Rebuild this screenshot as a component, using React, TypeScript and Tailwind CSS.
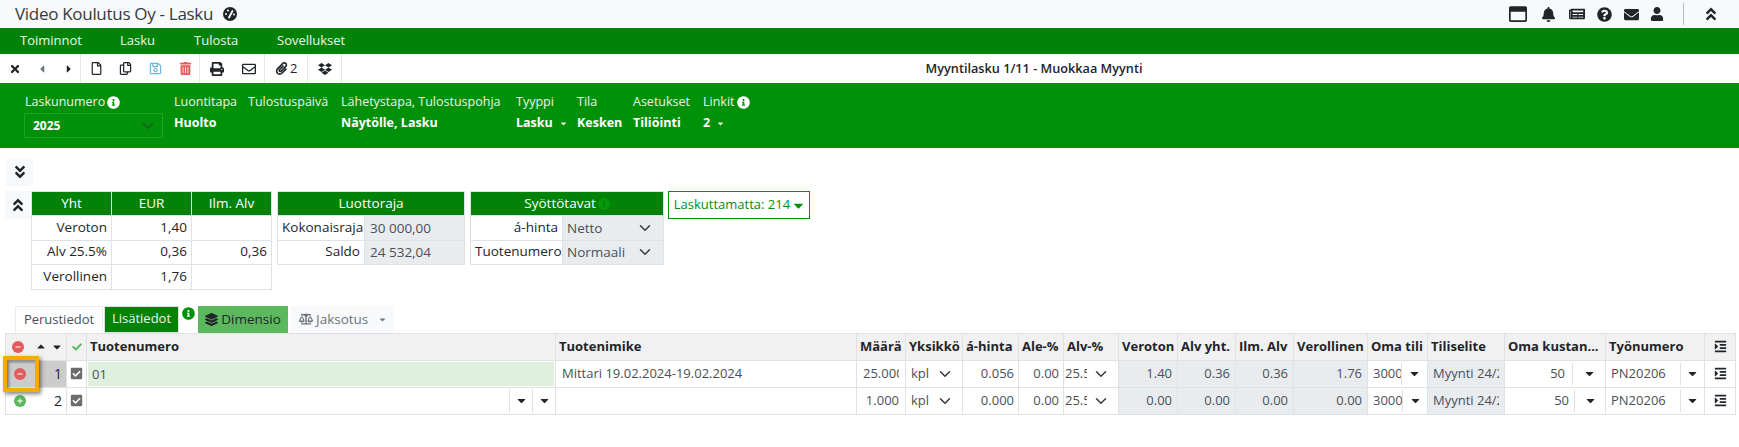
import React from 'react';
import {
  FaAngleDoubleDown, FaAngleDoubleUp, FaBalanceScale, FaBell, FaCaretDown, FaCaretLeft, FaCaretRight,
  FaCheck, FaCheckSquare, FaDropbox, FaEnvelope, FaIndent, FaInfoCircle, FaLayerGroup, FaNewspaper,
  FaPaperclip, FaPrint, FaQuestionCircle, FaRegCopy, FaRegEnvelope, FaRegFile,
  FaRegSave, FaRegWindowMaximize, FaTimes, FaTrashAlt, FaUser,
} from 'react-icons/fa';

const Chevron = ({ className = '' }: { className?: string }) => (
  <svg viewBox="0 0 16 16" className={`w-[12px] h-[12px] shrink-0 ${className}`} fill="none" stroke="#343a40" strokeWidth="2" strokeLinecap="round" strokeLinejoin="round">
    <path d="M2 5l6 6 6-6" />
  </svg>
);

const Caret = ({ className = '' }: { className?: string }) => <FaCaretDown className={`text-[13px] text-[#212529] shrink-0 ${className}`} />;

const Gauge = () => (
  <svg viewBox="0 0 14 14" className="ml-[10px] w-[14px] h-[14px]">
    <circle cx="7" cy="7" r="7" fill="#212529" />
    <path d="M6 10.5L9.5 4" stroke="#fff" strokeWidth="1.8" strokeLinecap="round" />
    <circle cx="3" cy="7" r="1" fill="#fff" />
    <circle cx="5" cy="3.6" r="1" fill="#fff" />
    <circle cx="11" cy="7.5" r="1" fill="#fff" />
  </svg>
);

const RoundMinus = () => (
  <svg viewBox="0 0 12 12" className="w-[12px] h-[12px] shrink-0">
    <circle cx="6" cy="6" r="6" fill="#e25c5c" />
    <rect x="3.5" y="5.3" width="5" height="1.4" fill="#f6d5d5" />
  </svg>
);

const RoundPlus = () => (
  <svg viewBox="0 0 12 12" className="w-[12px] h-[12px] shrink-0">
    <circle cx="6" cy="6" r="6" fill="#5cb85c" />
    <path d="M3.5 6h5M6 3.5v5" stroke="#d9f0d9" strokeWidth="1.4" />
  </svg>
);

const ToolSep = () => <div className="w-px self-stretch bg-[#e4e6e8]" />;

const Field = ({ label, value, caret, className }: { label: React.ReactNode; value?: string; caret?: boolean; className: string }) => (
  <div className={className}>
    <div className="text-[12.5px] leading-[18px] text-[#e8f5e8] whitespace-nowrap flex items-center gap-[2px]">{label}</div>
    <div className="mt-[3px] h-[18px] text-[12.5px] leading-[18px] font-bold text-white whitespace-nowrap flex items-center">
      {value}
      {caret && <FaCaretDown className="text-[9px] ml-[6px] text-[#e8f5e8]" />}
    </div>
  </div>
);

const SumTable = () => (
  <table className="table-fixed border-collapse text-[13.5px] w-[241px]">
    <tbody>
      <tr className="h-[24px] bg-[#028207] text-white text-center">
        {['Yht', 'EUR', 'Ilm. Alv'].map(h => <td key={h} className="border border-[#dee2e6] font-normal">{h}</td>)}
      </tr>
      {[['Veroton', '1,40', ''], ['Alv 25.5%', '0,36', '0,36'], ['Verollinen', '1,76', '']].map(r => (
        <tr key={r[0]} className="h-[24.5px] text-right text-[#212529]">
          {r.map((c, i) => <td key={i} className="border border-[#dee2e6] px-[4px] pb-[2px] w-[80px]">{c}</td>)}
        </tr>
      ))}
    </tbody>
  </table>
);

const CreditTable = () => (
  <table className="table-fixed border-collapse text-[13.5px] w-[187px] ml-[5px] self-start">
    <colgroup>
      <col className="w-[87px]" />
      <col className="w-[100px]" />
    </colgroup>
    <tbody>
      <tr className="h-[24px] bg-[#028207] text-white text-center">
        <td colSpan={2} className="border border-[#dee2e6]">Luottoraja</td>
      </tr>
      {[['Kokonaisraja', '30 000,00'], ['Saldo', '24 532,04']].map(r => (
        <tr key={r[0]} className="h-[24.5px] text-[#212529]">
          <td className="border border-[#dee2e6] text-right px-[4px] pb-[2px]">{r[0]}</td>
          <td className="border border-[#dee2e6] bg-[#e9ecef] px-[5px] text-[#495057]">{r[1]}</td>
        </tr>
      ))}
    </tbody>
  </table>
);

const ModeTable = () => (
  <table className="table-fixed border-collapse text-[13.5px] w-[193px] ml-[5px] self-start">
    <colgroup>
      <col className="w-[92px]" />
      <col className="w-[101px]" />
    </colgroup>
    <tbody>
      <tr className="h-[24px] bg-[#028207] text-white text-center">
        <td colSpan={2} className="border border-[#dee2e6]">
          <span className="inline-flex items-center gap-[2px]">Syöttötavat <FaInfoCircle className="text-[12px] text-[#049a0c]" /></span>
        </td>
      </tr>
      {[['á-hinta', 'Netto'], ['Tuotenumero', 'Normaali']].map(r => (
        <tr key={r[0]} className="h-[24.5px] text-[#212529]">
          <td className="border border-[#dee2e6] text-right px-[4px] pb-[2px]">{r[0]}</td>
          <td className="border border-[#dee2e6] bg-[#e9ecef] pl-[4px] pr-[12px] text-[#495057]">
            <div className="flex items-center justify-between">{r[1]}<Chevron /></div>
          </td>
        </tr>
      ))}
    </tbody>
  </table>
);

const COLS = ['w-[61px]', 'w-[20px]', 'w-[469px]', 'w-[301px]', 'w-[49px]', 'w-[57px]', 'w-[56px]', 'w-[45px]', 'w-[55px]', 'w-[59px]', 'w-[58px]', 'w-[58px]', 'w-[74px]', 'w-[60px]', 'w-[77px]', 'w-[101px]', 'w-[99px]', 'w-[31px]'];
const HEADS = ['Tuotenumero', 'Tuotenimike', 'Määrä', 'Yksikkö', 'á-hinta', 'Ale-%', 'Alv-%', 'Veroton', 'Alv yht.', 'Ilm. Alv', 'Verollinen', 'Oma tili', 'Tiliselite', 'Oma kustan...', 'Työnumero'];
const TD = 'border border-[#dee2e6] p-0 overflow-hidden whitespace-nowrap';

const Row = ({ n, first }: { n: number; first: boolean }) => {
  const money = first ? ['1.40', '0.36', '0.36'] : ['0.00', '0.00', '0.00'];
  return (
    <tr className="h-[27px] text-[13px] text-[#495057]">
      <td className={`${TD} ${first ? 'bg-[#cccccc]' : ''}`}>
        <div className="flex items-center justify-between pl-[8px] pr-[4px] text-[#212529] text-[14px]">
          {first ? <RoundMinus /> : <RoundPlus />}
          {n}
        </div>
      </td>
      <td className={TD}>
        <FaCheckSquare className="text-[13px] text-[#6c6c6c] mx-auto" />
      </td>
      <td className={TD}>
        {first
          ? <div className="mx-[1px] h-[24px] leading-[24px] bg-[#dff0df] px-[4px]">01</div>
          : (
            <div className="flex items-center justify-end h-[24px]">
              <div className="w-[23px] h-[24px] border-l border-[#dee2e6] flex items-center justify-center"><Caret /></div>
              <div className="w-[23px] h-[24px] border-l border-[#dee2e6] flex items-center justify-center"><Caret /></div>
            </div>
          )}
      </td>
      <td className={`${TD} px-[6px]`}>{first ? 'Mittari 19.02.2024-19.02.2024' : ''}</td>
      <td className={TD}>
        <div className="ml-[6px] mr-[6px] overflow-hidden text-right">{first ? <span className="block w-[37px] overflow-hidden">25.000</span> : '1.000'}</div>
      </td>
      <td className={`${TD} pl-[5px] pr-[11px]`}><div className="flex items-center justify-between">kpl<Chevron /></div></td>
      <td className={`${TD} text-right px-[4px]`}>{first ? '0.056' : '0.000'}</td>
      <td className={`${TD} text-right px-[4px]`}>0.00</td>
      <td className={`${TD} pl-[1px] pr-[11px]`}>
        <div className="flex items-center justify-between"><span className="w-[22px] overflow-hidden">25.5</span><Chevron /></div>
      </td>
      {money.map((m, i) => <td key={i} className={`${TD} bg-[#e9ecef] text-right px-[5px]`}>{m}</td>)}
      <td className={`${TD} bg-[#e9ecef] text-right px-[5px]`}>{first ? '1.76' : '0.00'}</td>
      <td className={TD}>
        <div className="flex items-center h-[24px] pl-[5px]">
          <span className={`${first ? 'w-[28px]' : 'w-[29px]'} overflow-hidden shrink-0`}>3000</span>
          <div className="flex-1 h-[22px] border-l border-[#dee2e6] flex items-center justify-center"><Caret /></div>
        </div>
      </td>
      <td className={`${TD} bg-[#e9ecef] pl-[5px]`}><span className="block w-[66px] overflow-hidden">Myynti 24/2</span></td>
      <td className={TD}>
        <div className="flex items-center h-[24px]">
          <span className={`flex-1 text-right ${first ? 'pr-[7px]' : 'pr-[5px]'}`}>50</span>
          <div className={`${first ? 'w-[33px]' : 'w-[31px]'} h-[22px] border-l border-[#dee2e6] flex items-center justify-center`}><Caret /></div>
        </div>
      </td>
      <td className={TD}>
        <div className="flex items-center h-[24px] pl-[5px]">
          <span className="flex-1">PN20206</span>
          <div className="w-[24px] h-[22px] border-l border-[#dee2e6] flex items-center justify-center"><Caret /></div>
        </div>
      </td>
      <td className={TD}><FaIndent className="text-[13px] text-[#212529] mx-auto" /></td>
    </tr>
  );
};

export default function App() {
  return (
    <div className="relative w-[1739px] h-[447px] bg-white overflow-hidden font-['Open_Sans',sans-serif] text-[#212529]">
      {/* title bar */}
      <div className="h-[28px] bg-[#f8f9fa] flex items-center pl-[15px] pr-[5px]">
        <span className="text-[17px] leading-[28px] tracking-[-0.3px] text-[#343a40]">Video Koulutus Oy - Lasku</span>
        <Gauge />
        <div className="ml-auto flex items-center text-[#212529]">
          <FaRegWindowMaximize className="text-[18px] mr-[14px]" />
          <FaBell className="text-[15px] mr-[13px]" />
          <FaNewspaper className="text-[16px] mr-[12px]" />
          <FaQuestionCircle className="text-[15px] mr-[12px]" />
          <FaEnvelope className="text-[15px] mr-[11px]" />
          <FaUser className="text-[14px] mr-[19px]" />
          <div className="w-px h-[22px] bg-[#b8bcc0] mr-[19px]" />
          <FaAngleDoubleUp className="text-[16px] mr-[15px]" />
        </div>
      </div>

      {/* menu */}
      <div className="h-[26px] bg-[#028207] flex items-center pl-[20px] text-[13px] text-[#eef8ee]">
        <span className="w-[100px]">Toiminnot</span>
        <span className="w-[74px]">Lasku</span>
        <span className="w-[83px]">Tulosta</span>
        <span>Sovellukset</span>
      </div>

      {/* toolbar */}
      <div className="relative h-[29px] flex items-center bg-white">
        <div className="flex items-center h-full w-[80px] shrink-0 pl-[9px]">
          <FaTimes className="text-[12px] text-[#212529]" />
          <FaCaretLeft className="text-[12px] text-[#6c757d] ml-[15px]" />
          <FaCaretRight className="text-[12px] text-[#212529] ml-[15px]" />
        </div>
        <ToolSep />
        <div className="flex items-center h-full w-[118px] shrink-0 pl-[9px]">
          <FaRegFile className="text-[13px] text-[#212529]" />
          <FaRegCopy className="text-[13px] text-[#212529] ml-[16px]" />
          <FaRegSave className="text-[13px] text-[#6db6de] ml-[17px]" />
          <FaTrashAlt className="text-[13px] text-[#e35d5d] ml-[17px]" />
        </div>
        <ToolSep />
        <div className="flex items-center h-full w-[64px] shrink-0 pl-[10px]">
          <FaPrint className="text-[14px] text-[#212529]" />
          <FaRegEnvelope className="text-[14px] text-[#212529] ml-[18px]" />
        </div>
        <ToolSep />
        <div className="flex items-center h-full w-[42px] shrink-0 pl-[10px] text-[13px]">
          <FaPaperclip className="text-[13px] text-[#212529]" />
          <span className="ml-[2px]">2</span>
        </div>
        <ToolSep />
        <div className="flex items-center justify-center h-full w-[33px] shrink-0">
          <FaDropbox className="text-[14px] text-[#212529]" />
        </div>
        <ToolSep />
        <div className="flex-1 text-center text-[12.7px] font-semibold text-[#212529] pr-[13px]">Myyntilasku 1/11 - Muokkaa Myynti</div>
      </div>

      {/* header panel */}
      <div className="h-[65px] bg-[#019108] flex pt-[10px] pl-[24px]">
        <div className="w-[150px] shrink-0">
          <div className="text-[12.5px] leading-[18px] text-[#e8f5e8] flex items-center gap-[2px] pl-[1px]">
            Laskunumero <FaInfoCircle className="text-[13px] text-white" />
          </div>
          <div className="mt-[2px] w-[139px] h-[25px] border border-[#1ea326] flex items-center justify-between pl-[8px] pr-[8px] text-[12px] font-bold text-white">
            2025
            <Chevron className="opacity-60" />
          </div>
        </div>
        <Field className="w-[74px] shrink-0" label="Luontitapa" value="Huolto" />
        <Field className="w-[93px] shrink-0" label="Tulostuspäivä" />
        <Field className="w-[175px] shrink-0" label="Lähetystapa, Tulostuspohja" value="Näytölle, Lasku" />
        <Field className="w-[61px] shrink-0" label="Tyyppi" value="Lasku" caret />
        <Field className="w-[56px] shrink-0" label="Tila" value="Kesken" />
        <Field className="w-[70px] shrink-0" label="Asetukset" value="Tiliöinti" />
        <Field
          className="shrink-0"
          label={<>Linkit <FaInfoCircle className="text-[13px] text-white" /></>}
          value="2"
          caret
        />
      </div>

      {/* collapse button */}
      <div className="ml-[6px] mt-[10px] w-[27px] h-[28px] bg-[#f8f9fa] flex items-center justify-center">
        <FaAngleDoubleDown className="text-[16px] text-[#212529]" />
      </div>

      {/* summary tables */}
      <div className="flex items-start mt-[5px] ml-[5px]">
        <div className="w-[26px] h-[28px] bg-[#f8f9fa] flex items-center justify-center shrink-0">
          <FaAngleDoubleUp className="text-[16px] text-[#212529]" />
        </div>
        <SumTable />
        <CreditTable />
        <ModeTable />
        <div className="ml-[4px] w-[142px] h-[28px] border border-[#019108] flex items-center justify-center text-[13px] text-[#019108] gap-[3px] pl-[2px]">
          Laskuttamatta: 214 <FaCaretDown className="text-[15px] -ml-[2px]" />
        </div>
      </div>

      {/* tabs */}
      <div className="flex items-end h-[27px] mt-[16px] ml-[15px] text-[13px]">
        <div className="w-[88px] h-[27px] border-t border-x border-[#e9ecef] flex items-center justify-center text-[#495057]">Perustiedot</div>
        <div className="ml-[1px] w-[75px] h-[27px] bg-[#028207] border border-[#dee2e6] flex items-center justify-center text-[#eef8ee]">Lisätiedot</div>
        <div className="w-[19px] h-[27px] flex justify-center pt-[1px] shrink-0">
          <FaInfoCircle className="text-[13px] text-[#019108]" />
        </div>
        <div className="w-[90px] h-[27px] bg-[#5cb85c] flex items-center justify-center gap-[3px] text-[13.5px] text-[#212529]">
          <FaLayerGroup className="text-[13px]" /> Dimensio
        </div>
        <div className="ml-[3px] w-[103px] h-[27px] bg-[#f8f9fa] flex items-center pl-[8px] text-[#6c757d] gap-[3px] text-[13.5px]">
          <FaBalanceScale className="text-[14px]" /> Jaksotus
          <FaCaretDown className="ml-auto mr-[7px] text-[9px]" />
        </div>
      </div>

      {/* rows */}
      <div className="relative ml-[5px] w-[1730px]">
        <table className="table-fixed border-collapse w-[1730px]">
          <colgroup>
            {COLS.map((c, i) => <col key={i} className={c} />)}
          </colgroup>
          <thead>
            <tr className="h-[27px] bg-[#f1f1f1] text-[13px] font-bold text-[#212529] text-left">
              <th className={TD}>
                <div className="flex items-center justify-between pl-[6px] pr-[3px]">
                  <RoundMinus />
                  <FaCaretDown className="text-[12px] rotate-180 ml-[7px]" />
                  <FaCaretDown className="text-[12px]" />
                </div>
              </th>
              <th className={TD}><FaCheck className="text-[10px] text-[#5cb85c] mx-auto" /></th>
              {HEADS.map(h => <th key={h} className={`${TD} px-[3px]`}>{h}</th>)}
              <th className={TD}><FaIndent className="text-[13px] mx-auto" /></th>
            </tr>
          </thead>
          <tbody>
            <Row n={1} first />
            <Row n={2} first={false} />
          </tbody>
        </table>
        {/* highlight */}
        <div className="absolute left-[-2px] top-[23px] w-[36px] h-[36px] border-[4px] border-[#f5ab00] shadow-[2px_2px_4px_rgba(0,0,0,0.5),inset_2px_2px_3px_rgba(0,0,0,0.4)] pointer-events-none" />
      </div>
    </div>
  );
}
